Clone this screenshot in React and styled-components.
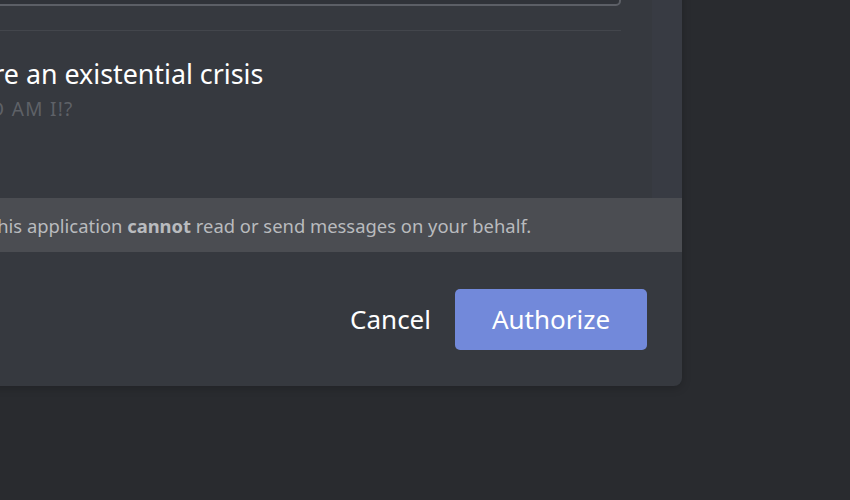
import React from "react";
import styled, { createGlobalStyle } from "styled-components";

const GlobalStyle = createGlobalStyle`
  html, body {
    margin: 0;
    padding: 0;
    background: #292b2f;
    overflow: hidden;
  }
  body {
    font-family: "Noto Sans", "Open Sans", sans-serif;
  }
`;

const Page = styled.div`
  width: 850px;
  height: 500px;
  display: flex;
  align-items: flex-start;
`;

const Modal = styled.div`
  width: 780px;
  margin-left: -98px;
  margin-top: -40px;
  background: #36393f;
  border-radius: 0 0 8px 0;
  box-shadow: 0 2px 10px rgba(0, 0, 0, 0.2);
  display: flex;
  flex-direction: column;
  overflow: hidden;
`;

const Scroller = styled.div`
  display: flex;
  height: 238px;
`;

const ScrollContent = styled.div`
  flex: 1;
  padding: 0 31px 0 32px;
`;

const Gutter = styled.div`
  width: 30px;
  background: #383b43;
`;

const Input = styled.div`
  height: 42px;
  border: 2px solid #5c5f66;
  border-radius: 5px;
  background: #303339;
`;

const Divider = styled.div`
  height: 1px;
  background: #43464c;
  margin-top: 24px;
`;

const Scope = styled.div`
  padding: 27px 0 0 ${(p) => p.$indent}px;
`;

const ScopeTitle = styled.div`
  color: #ffffff;
  font-size: 26.8px;
  line-height: 32px;
  font-weight: 400;
`;

const ScopeSub = styled.div`
  color: #5e6167;
  font-size: 19px;
  letter-spacing: 1.3px;
  line-height: 24px;
  margin-top: 7px;
  margin-left: ${(p) => p.$shift}px;
`;

const Notice = styled.div`
  height: 54px;
  background: #4b4d52;
  display: flex;
  align-items: center;
  padding-left: ${(p) => p.$indent}px;
  color: #b9bbbe;
  font-size: 18.4px;

  strong {
    font-weight: 700;
  }
`;

const Footer = styled.div`
  height: 134px;
  display: flex;
  justify-content: flex-end;
  align-items: center;
  gap: 24px;
  padding-right: 35px;
`;

const CancelButton = styled.button`
  background: none;
  border: none;
  color: #ffffff;
  font-family: inherit;
  font-size: 26px;
  padding: 0;
  cursor: pointer;
`;

const AuthorizeButton = styled.button`
  width: 192px;
  height: 61px;
  background: #7289da;
  border: none;
  border-radius: 5px;
  color: #ffffff;
  font-family: inherit;
  font-size: 26px;
  cursor: pointer;
`;

export default function App() {
  return (
    <>
      <GlobalStyle />
      <Page>
        <Modal>
          <Scroller>
            <ScrollContent>
              <Input />
              <Divider />
              <Scope $indent={13}>
                <ScopeTitle>Share an existential crisis</ScopeTitle>
                <ScopeSub $shift={8}>WHO AM I!?</ScopeSub>
              </Scope>
            </ScrollContent>
            <Gutter />
          </Scroller>
          <Notice $indent={85}>
            <span>
              This application <strong>cannot</strong> read or send messages on your behalf.
            </span>
          </Notice>
          <Footer>
            <CancelButton>Cancel</CancelButton>
            <AuthorizeButton>Authorize</AuthorizeButton>
          </Footer>
        </Modal>
      </Page>
    </>
  );
}
